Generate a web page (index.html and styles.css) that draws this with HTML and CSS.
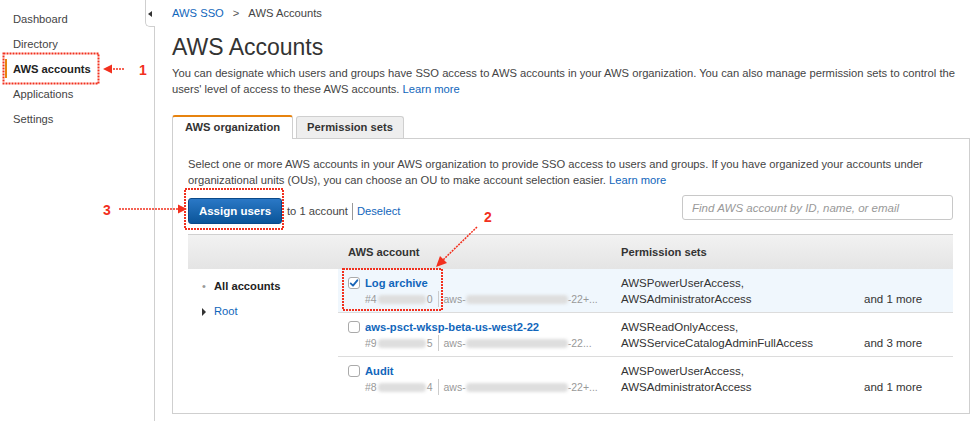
FILE: index.html
```html
<!DOCTYPE html>
<html lang="en">
<head>
<meta charset="utf-8">
<title>AWS Accounts</title>
<link rel="stylesheet" href="styles.css">
</head>
<body>
<div class="layout">
  <aside class="sidebar">
    <div class="collapse-tab"><span class="collapse-arrow"></span></div>
    <nav class="nav">
      <div class="nav-item">Dashboard</div>
      <div class="nav-item">Directory</div>
      <div class="nav-item active">AWS accounts</div>
      <div class="nav-item">Applications</div>
      <div class="nav-item">Settings</div>
    </nav>
  </aside>
  <main class="main">
    <div class="breadcrumb"><a class="link">AWS SSO</a><span class="crumb-sep">&gt;</span><span>AWS Accounts</span></div>
    <h1 class="title">AWS Accounts</h1>
    <p class="desc">You can designate which users and groups have SSO access to AWS accounts in your AWS organization. You can also manage permission sets to control the<br>users' level of access to these AWS accounts. <a class="link">Learn more</a></p>
    <div class="tabs">
      <div class="tab active">AWS organization</div>
      <div class="tab">Permission sets</div>
    </div>
    <section class="panel">
      <p class="intro">Select one or more AWS accounts in your AWS organization to provide SSO access to users and groups. If you have organized your accounts under<br>organizational units (OUs), you can choose an OU to make account selection easier. <a class="link">Learn more</a></p>
      <div class="toolbar">
        <div class="assign">
          <button class="btn-primary">Assign users</button>
          <span class="assign-count">to 1 account</span>
          <span class="vsep"></span>
          <a class="link">Deselect</a>
        </div>
        <input class="search" type="text" placeholder="Find AWS account by ID, name, or email">
      </div>
      <div class="table">
        <div class="thead">
          <div class="th th-tree"></div>
          <div class="th">AWS account</div>
          <div class="th th-perm">Permission sets</div>
        </div>
        <div class="tbody">
          <div class="tree">
            <div class="tree-item"><span class="tree-icon bullet">&#8226;</span><b>All accounts</b></div>
            <div class="tree-item"><span class="tree-icon caret"></span><a class="link">Root</a></div>
          </div>
          <div class="rows">
            <div class="row selected">
              <div class="acct">
                <div class="acct-name"><span class="checkbox checked"><svg viewBox="0 0 12 12" width="10" height="10"><path d="M2 6.5 L4.8 9.2 L10 2.8" fill="none" stroke="#1b66b8" stroke-width="2.2" stroke-linecap="round" stroke-linejoin="round"/></svg></span><a class="link strong">Log archive</a></div>
                <div class="acct-sub"><span>#4</span><span class="blur w44"></span><span>0</span><span class="vsep small"></span><span>aws-</span><span class="blur w96"></span><span>-22+...</span></div>
              </div>
              <div class="perm">
                <div class="perm-list">AWSPowerUserAccess,<br>AWSAdministratorAccess</div>
                <div class="perm-more">and 1 more</div>
              </div>
            </div>
            <div class="row">
              <div class="acct">
                <div class="acct-name"><span class="checkbox"></span><a class="link strong">aws-psct-wksp-beta-us-west2-22</a></div>
                <div class="acct-sub"><span>#9</span><span class="blur w44"></span><span>5</span><span class="vsep small"></span><span>aws-</span><span class="blur w96"></span><span>-22...</span></div>
              </div>
              <div class="perm">
                <div class="perm-list">AWSReadOnlyAccess,<br>AWSServiceCatalogAdminFullAccess</div>
                <div class="perm-more">and 3 more</div>
              </div>
            </div>
            <div class="row last">
              <div class="acct">
                <div class="acct-name"><span class="checkbox"></span><a class="link strong">Audit</a></div>
                <div class="acct-sub"><span>#8</span><span class="blur w44"></span><span>4</span><span class="vsep small"></span><span>aws-</span><span class="blur w96"></span><span>-22+...</span></div>
              </div>
              <div class="perm">
                <div class="perm-list">AWSPowerUserAccess,<br>AWSAdministratorAccess</div>
                <div class="perm-more">and 1 more</div>
              </div>
            </div>
          </div>
        </div>
      </div>
    </section>
  </main>
</div>
<svg class="annotations" width="979" height="421" viewBox="0 0 979 421">
  <g fill="none" stroke="#f2301e" stroke-width="2" stroke-dasharray="2 1">
    <rect x="3.5" y="53.5" width="95" height="30"/>
    <rect x="185" y="189" width="98" height="40"/>
    <rect x="343" y="269" width="99" height="41"/>
  </g>
  <g stroke="#f2301e" stroke-width="1.5" stroke-dasharray="2 1">
    <line x1="110" y1="69" x2="124" y2="69"/>
    <line x1="119" y1="209" x2="179" y2="209"/>
    <line x1="477" y1="227" x2="443" y2="260"/>
  </g>
  <g fill="#f2301e">
    <polygon points="103,69 112,64.5 112,73.5"/>
    <polygon points="187,209 178,204.5 178,213.5"/>
    <polygon points="436,267 440,256 447,263"/>
  </g>
  <g fill="#f2301e" font-family="Liberation Sans, Arial, sans-serif" font-weight="bold" font-size="14">
    <text x="139" y="75">1</text>
    <text x="103" y="215">3</text>
    <text x="484" y="222">2</text>
  </g>
</svg>
</body>
</html>
```
FILE: styles.css
```css
* { box-sizing: border-box; }

body {
  margin: 0;
  font-family: "Liberation Sans", Helvetica, Arial, sans-serif;
  font-size: 11.2px;
  color: #444;
  background: #fff;
  position: relative;
}

.link { color: #1166bb; text-decoration: none; }
.link.strong { font-weight: bold; }

.layout {
  display: flex;
  min-height: 421px;
}

/* Sidebar */
.sidebar {
  width: 155px;
  flex: none;
  border-right: 1px solid #cfcfcf;
  padding-top: 7px;
  position: relative;
}
.collapse-tab {
  position: absolute;
  top: -1px;
  right: -1px;
  width: 10px;
  height: 28px;
  background: #fff;
  border: 1px solid #cfcfcf;
  border-right: none;
  border-radius: 0 0 0 5px;
}
.collapse-arrow {
  position: absolute;
  left: 2px;
  top: 11px;
  width: 0;
  height: 0;
  border-top: 3.5px solid transparent;
  border-bottom: 3.5px solid transparent;
  border-right: 4px solid #333;
}
.nav-item {
  height: 25px;
  line-height: 25px;
  padding-left: 13px;
  color: #444;
  position: relative;
}
.nav-item.active { font-weight: bold; color: #222; }
.nav-item.active::before {
  content: "";
  position: absolute;
  left: 5px;
  top: 2px;
  width: 2px;
  height: 19px;
  background: #e7830f;
}

/* Main */
.main {
  flex: 1;
  padding: 0 9px 0 17px;
  min-width: 0;
}
.breadcrumb {
  height: 26px;
  line-height: 26px;
  color: #444;
}
.crumb-sep { margin: 0 9px; color: #555; }
.title {
  margin: 0;
  font-size: 23px;
  font-weight: normal;
  line-height: 30px;
  height: 30px;
  margin-top: 6px;
  color: #333;
}
.desc {
  margin: 3px 0 0;
  line-height: 16px;
  color: #444;
  white-space: nowrap;
}

.tabs {
  display: flex;
  align-items: flex-end;
  gap: 3px;
  margin-top: 18px;
  height: 23px;
}
.tab {
  height: 22px;
  line-height: 21px;
  padding: 0 10px;
  font-weight: bold;
  color: #333;
  background: #eee;
  border: 1px solid #cfcfcf;
  border-bottom: none;
  border-radius: 3px 3px 0 0;
}
.tab.active {
  height: 24px;
  margin-bottom: -1px;
  background: #fff;
  border-top: 2px solid #e7830f;
  padding: 0 12px;
  line-height: 21px;
  position: relative;
}

.panel {
  border: 1px solid #cfcfcf;
  padding: 17px 16px 11px 15px;
  height: 276px;
}
.intro {
  margin: 0;
  line-height: 16px;
  color: #444;
  white-space: nowrap;
}
.toolbar {
  display: flex;
  justify-content: space-between;
  align-items: flex-start;
  margin-top: 7px;
  height: 39px;
}
.assign {
  display: flex;
  align-items: center;
  margin-top: 3px;
}
.btn-primary {
  width: 94px;
  height: 26px;
  border: 1px solid #0a4a8a;
  border-radius: 3px;
  background: linear-gradient(#2a78c6, #0b5599);
  color: #fff;
  font-family: inherit;
  font-size: 11.5px;
  font-weight: bold;
  padding: 0;
}
.assign-count { margin-left: 5px; color: #444; }
.vsep {
  display: inline-block;
  width: 1px;
  height: 17px;
  background: #999;
  margin: 0 4px;
}
.vsep.small { height: 16px; background: #ccc; margin: 0 5px; }
.search {
  width: 271px;
  height: 25px;
  border: 1px solid #c8c8c8;
  border-radius: 3px;
  padding: 0 9px;
  font-family: inherit;
  font-size: 11.5px;
  font-style: italic;
  color: #444;
  outline: none;
}
.search::placeholder { color: #999; font-style: italic; }

/* Table */
.table { width: 765px; }
.thead {
  display: grid;
  grid-template-columns: 150px 273px 1fr;
  height: 35px;
  line-height: 34px;
  background: linear-gradient(#f2f2f2, #e4e4e4);
  border-top: 1px solid #d0d0d0;
  font-weight: bold;
  color: #333;
}
.th { padding-left: 10px; }
.th-tree { padding: 0; }
.tbody { display: flex; }
.tree {
  width: 150px;
  flex: none;
  padding: 5px 0 0 14px;
}
.tree-item {
  height: 25px;
  line-height: 25px;
  display: flex;
  align-items: center;
  color: #222;
}
.tree-icon {
  width: 12px;
  flex: none;
}
.bullet { color: #999; font-size: 11px; }
.caret {
  height: 0;
  width: 0;
  margin-right: 8px;
  border-top: 4px solid transparent;
  border-bottom: 4px solid transparent;
  border-left: 4px solid #333;
}
.rows { flex: 1; }
.row {
  display: grid;
  grid-template-columns: 273px 1fr;
  align-items: start;
  height: 44px;
  padding-top: 6px;
  border-bottom: 1px solid #dcdcdc;
}
.row.selected { background: #f0f7fd; }
.row.last { border-bottom: none; }
.acct { padding-left: 10px; }
.acct-name {
  height: 16px;
  line-height: 16px;
  display: flex;
  align-items: center;
}
.checkbox {
  width: 12px;
  height: 12px;
  border: 1px solid #aaa;
  border-radius: 3px;
  background: #fff;
  margin-right: 5px;
  display: inline-flex;
  align-items: center;
  justify-content: center;
  flex: none;
}
.acct-sub {
  height: 16px;
  line-height: 16px;
  padding-left: 17px;
  font-size: 10.5px;
  color: #999;
  display: flex;
  align-items: center;
  white-space: nowrap;
}
.blur {
  display: inline-block;
  height: 9px;
  background: #dedede;
  border-radius: 4px;
  filter: blur(1.5px);
}
.w44 { width: 48px; margin: 0 1px; }
.w96 { width: 102px; }
.perm {
  display: grid;
  grid-template-columns: 243px 1fr;
  align-items: start;
  padding-left: 10px;
  line-height: 16px;
  color: #333;
}
.perm-list { font-size: 11.5px; }
.perm-more { padding-top: 16px; color: #333; font-size: 11.5px; }

/* Annotation overlay */
.annotations {
  position: absolute;
  left: 0;
  top: 0;
  pointer-events: none;
}
```
